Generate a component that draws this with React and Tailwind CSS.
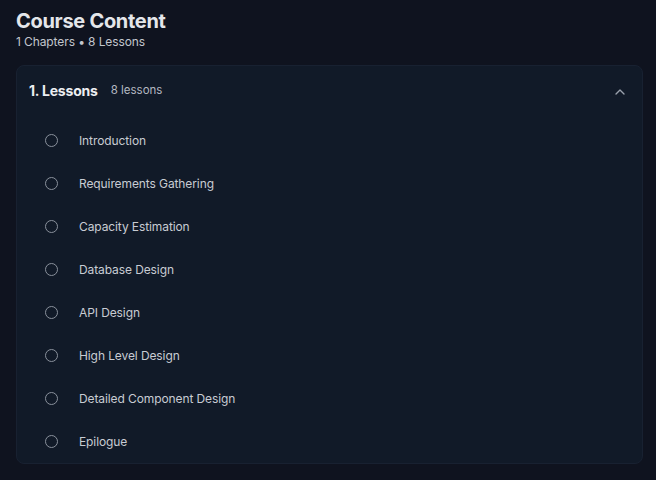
import React from "react";

const lessons = [
  "Introduction",
  "Requirements Gathering",
  "Capacity Estimation",
  "Database Design",
  "API Design",
  "High Level Design",
  "Detailed Component Design",
  "Epilogue",
];

export default function App() {
  return (
    <div
      className="w-[656px] h-[480px] bg-[#0f131f] pl-4 pr-[13px] pt-[7px] overflow-hidden"
      style={{ fontFamily: "Inter, 'Noto Sans', sans-serif" }}
    >
      <h1 className="text-[20px] leading-[28px] font-bold text-[#e4e6ea] tracking-[-0.3px]">
        Course Content
      </h1>
      <p className="text-[12px] leading-[14px] text-[#c2c6cd] tracking-[-0.1px]">
        1 Chapters • 8 Lessons
      </p>
      <div className="mt-[16px] rounded-lg bg-[#111a28] border border-[#182131]">
        <div className="flex items-center justify-between pl-3 pr-[14px] py-[15px]">
          <div className="flex items-center gap-[13px]">
            <span className="text-[14px] leading-[20px] font-bold text-[#eceef1] tracking-[-0.2px]">
              1. Lessons
            </span>
            <span className="text-[11.5px] leading-[20px] text-[#b4b9c1] -mt-[3px]">
              8 lessons
            </span>
          </div>
          <svg className="mt-[2px]" width="16" height="16" viewBox="0 0 24 24" fill="none" stroke="#9aa1ac" strokeWidth="2" strokeLinecap="round" strokeLinejoin="round">
            <path d="m18 15-6-6-6 6" />
          </svg>
        </div>
        <ul className="flex flex-col pt-[3px]">
          {lessons.map((l) => (
            <li key={l} className="h-[43px] flex items-center pl-[28px]">
              <span className="w-[13px] h-[13px] rounded-full border-[1.5px] border-[#8a919c]" />
              <span className="ml-[21px] text-[12px] text-[#c8ccd3] tracking-[-0.1px]">{l}</span>
            </li>
          ))}
        </ul>
      </div>
    </div>
  );
}
